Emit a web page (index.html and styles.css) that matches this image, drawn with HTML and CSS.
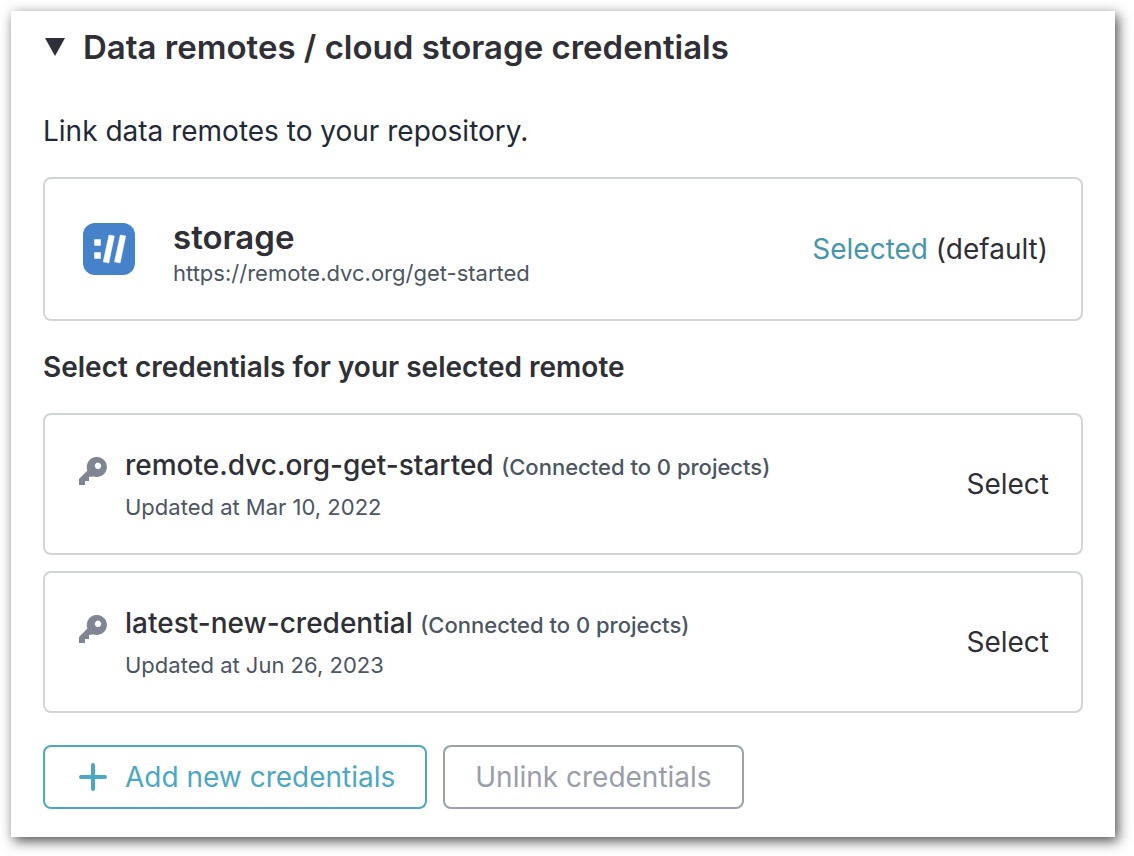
FILE: index.html
```html
<!DOCTYPE html>
<html lang="en">
<head>
<meta charset="utf-8">
<meta name="viewport" content="width=device-width, initial-scale=1">
<title>Data remotes</title>
<link rel="stylesheet" href="styles.css">
</head>
<body>
<main class="panel">
  <details class="section" open>
    <summary class="section-title">
      <svg class="caret" viewBox="0 0 20 18" aria-hidden="true"><path d="M0 0h20L10 18z" fill="currentColor"/></svg>
      <h1>Data remotes / cloud storage credentials</h1>
    </summary>
    <p class="intro">Link data remotes to your repository.</p>
    <section class="card remote">
      <svg class="logo" viewBox="0 0 52 52" aria-hidden="true">
        <rect width="52" height="52" rx="12" fill="#4582c9"/>
        <path d="M11.500 16.500h6v6h-6zM11.500 29.500h6v6h-6zM26 12l5.400 1-5.600 27-5.600-1.200zM37.300 12l5.400 1-5.600 27-5.600-1.200z" fill="#fff" stroke="#fff" stroke-width=".5" stroke-linejoin="round"/>
      </svg>
      <div class="info">
        <h2 class="remote-name">storage</h2>
        <p class="meta">https://remote.dvc.org/get-started</p>
      </div>
      <p class="status"><span class="selected">Selected</span> (default)</p>
    </section>
    <h2 class="subtitle">Select credentials for your selected remote</h2>
    <div class="list">
      <section class="card credential">
        <svg class="key" viewBox="0 0 28 28" aria-hidden="true"><path fill="currentColor" fill-rule="evenodd" d="M18 0a10 10 0 1 1-4 19.200l-.8.600H10V24H6v4H0v-6l8.400-8.400A10 10 0 0 1 18 0zm1 5.600a3.200 3.200 0 1 0 .01 0z"/></svg>
        <div class="info">
          <h3 class="name">remote.dvc.org-get-started <span class="count">(Connected to 0 projects)</span></h3>
          <p class="meta">Updated at Mar 10, 2022</p>
        </div>
        <button class="select" type="button">Select</button>
      </section>
      <section class="card credential">
        <svg class="key" viewBox="0 0 28 28" aria-hidden="true"><path fill="currentColor" fill-rule="evenodd" d="M18 0a10 10 0 1 1-4 19.200l-.8.600H10V24H6v4H0v-6l8.400-8.400A10 10 0 0 1 18 0zm1 5.600a3.200 3.200 0 1 0 .01 0z"/></svg>
        <div class="info">
          <h3 class="name">latest-new-credential <span class="count">(Connected to 0 projects)</span></h3>
          <p class="meta">Updated at Jun 26, 2023</p>
        </div>
        <button class="select" type="button">Select</button>
      </section>
    </div>
    <div class="actions">
      <button class="btn primary" type="button">
        <svg class="plus" viewBox="0 0 28 28" aria-hidden="true"><path d="M14 2v24M2 14h24" stroke="currentColor" stroke-width="4" stroke-linecap="round"/></svg>
        Add new credentials
      </button>
      <button class="btn" type="button" disabled>Unlink credentials</button>
    </div>
  </details>
</main>
</body>
</html>
```
FILE: styles.css
```css
* { box-sizing: border-box; }
body {
  margin: 0;
  background: #fff;
  color: #2f2f37;
  font-family: Inter, "Liberation Sans", sans-serif;
  font-size: 28px;
  line-height: 36px;
}
h1, h2, h3, p { margin: 0; }
.panel {
  margin: 11px 19px 19px 11px;
  padding: 16px 32px 28px;
  background: #fff;
  box-shadow: 3px 4px 12px rgba(0, 0, 0, 0.7);
}
.section-title {
  display: flex;
  align-items: center;
  gap: 18px;
  list-style: none;
  cursor: pointer;
}
.section-title::-webkit-details-marker { display: none; }
.section-title h1 { font-size: 33px; line-height: 40px; font-weight: 600; }
.caret { width: 20px; height: 18px; margin-left: 2px; }
.intro { margin-top: 46px; color: #1f2937; }
.card {
  display: flex;
  align-items: center;
  border: 2px solid #d1d4d9;
  border-radius: 8px;
}
.remote { min-height: 144px; margin-top: 28px; padding: 30px 33px 30px 38px; }
.logo { width: 52px; height: 52px; margin-right: 38px; }
.info { flex: 1; }
.remote .info { padding-top: 8px; }
.remote-name { font-size: 33px; line-height: 40px; font-weight: 600; }
.meta { color: #4b5563; font-size: 22px; line-height: 32px; }
.selected { color: #4496ad; }
.subtitle { margin-top: 28px; font-size: 28px; font-weight: 600; }
.list { display: grid; gap: 16px; margin-top: 28px; }
.credential { min-height: 142px; padding: 30px 32px; }
.key { width: 28px; height: 28px; margin: 0 18px 26px 2px; color: #7f8593; }
.credential .info { padding-top: 2px; }
.name { font-size: 28px; font-weight: 500; }
.name + .meta { margin-top: 6px; }
.count { color: #4b5563; font-size: 22px; }
.select { padding: 0; border: 0; background: none; color: inherit; font: inherit; cursor: pointer; }
.actions { display: flex; gap: 16px; margin-top: 32px; }
.btn {
  display: flex;
  align-items: center;
  gap: 18px;
  min-height: 64px;
  padding: 0 30px;
  border: 2px solid #9ca0ae;
  border-radius: 8px;
  background: #fff;
  color: #9a9daa;
  font: inherit;
}
.primary { padding-left: 34px; border-color: #4ba8c3; color: #4ba8c3; cursor: pointer; }
.plus { width: 28px; height: 28px; }
```
